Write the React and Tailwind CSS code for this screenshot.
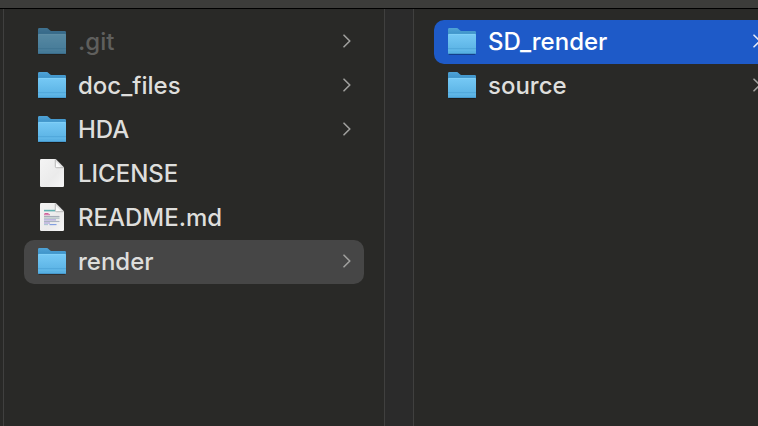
import { useId, useState } from "react";

const COLUMNS = [
  {
    id: "root",
    items: [
      { name: ".git", type: "folder", hidden: true },
      { name: "doc_files", type: "folder" },
      { name: "HDA", type: "folder" },
      { name: "LICENSE", type: "file" },
      { name: "README.md", type: "markdown" },
      { name: "render", type: "folder" },
    ],
  },
  {
    id: "render",
    items: [
      { name: "SD_render", type: "folder" },
      { name: "source", type: "folder" },
    ],
  },
];

const App = () => {
  const [selected, setSelected] = useState({
    root: "render",
    render: "SD_render",
  });
  const [activeColumn, setActiveColumn] = useState("render");

  const handleSelect = (columnId, name) => {
    setSelected((prev) => ({ ...prev, [columnId]: name }));
    setActiveColumn(columnId);
  };

  return (
    <div className="min-h-screen flex flex-col overflow-hidden bg-[#292927] font-['Inter','Liberation_Sans',sans-serif]">
      {/* Bottom edge of the toolbar */}
      <header className="h-[9px] shrink-0 bg-[#3c3c3a] border-b border-black" />

      {/* Columns */}
      <main className="flex flex-1 pl-[3px]">
        {COLUMNS.map((column) => (
          <Column
            key={column.id}
            items={column.items}
            selectedName={selected[column.id]}
            isActive={activeColumn === column.id}
            onSelect={(name) => handleSelect(column.id, name)}
          />
        ))}
      </main>
    </div>
  );
};

// ── Single column with its resize gutter ──
const Column = ({ items, selectedName, isActive, onSelect }) => (
  <>
    <ul className="w-[382px] shrink-0 border-x border-[#40403f] px-5 pt-[11px]">
      {items.map((item) => (
        <li key={item.name}>
          <Row
            item={item}
            isSelected={item.name === selectedName}
            isActive={isActive}
            onClick={() => onSelect(item.name)}
          />
        </li>
      ))}
    </ul>
    <div className="w-7 shrink-0 bg-[#2b2b2b]" />
  </>
);

// ── File or folder row ──
const Row = ({ item, isSelected, isActive, onClick }) => {
  let rowStyle = "text-[#dededc]";
  if (isSelected) {
    rowStyle = isActive ? "bg-[#1e5ac8] text-white" : "bg-[#464646] text-[#dededc]";
  }

  return (
    <button
      onClick={onClick}
      className={`flex h-11 w-full items-center gap-3 rounded-[10px] pl-3.5 pr-[13px] text-left text-2xl font-medium ${rowStyle}`}
    >
      <span className={item.hidden ? "opacity-60" : ""}>
        {item.type === "folder" ? (
          <FolderIcon />
        ) : (
          <FileIcon hasText={item.type === "markdown"} />
        )}
      </span>
      <span className={`flex-1 truncate ${item.hidden ? "text-[#5f5f5d]" : ""}`}>
        {item.name}
      </span>
      {item.type === "folder" && (
        <Chevron
          className={isSelected && isActive ? "text-[#e3eaf8]" : "text-[#a0a09e]"}
        />
      )}
    </button>
  );
};

// ── Icons ──
const FolderIcon = () => {
  const id = useId();

  return (
    <svg width="28" height="28" viewBox="0 0 28 28" aria-hidden="true">
      <defs>
        <linearGradient id={`${id}back`} x1="0" y1="0" x2="0" y2="1">
          <stop offset="0" stopColor="#4fa3d6" />
          <stop offset="0.3" stopColor="#3a8fc6" />
        </linearGradient>
        <linearGradient id={`${id}front`} x1="0" y1="0" x2="0" y2="1">
          <stop offset="0" stopColor="#76c9f5" />
          <stop offset="1" stopColor="#55aee1" />
        </linearGradient>
      </defs>
      <rect x="0.5" y="25" width="27" height="2" rx="1" fill="#000" opacity="0.3" />
      <path
        d="M0 1.4Q0 0 1.4 0H8.2C9.4 0 10 .4 10.8 1.2L11.6 2C12.3 2.7 12.9 3 14 3H26.8Q28 3 28 4.2V24.8Q28 26 26.8 26H1.2Q0 26 0 24.8Z"
        fill={`url(#${id}back)`}
      />
      <path
        d="M0 7Q0 6 1 6H27Q28 6 28 7V24.8Q28 26 26.8 26H1.2Q0 26 0 24.8Z"
        fill={`url(#${id}front)`}
      />
      <path d="M.5 6.4H27.5" stroke="#85d2f8" strokeWidth="0.8" />
      <path d="M0 20.5H28" stroke="#4fa6d9" strokeWidth="0.8" />
      <path d="M0 22.5H28" stroke="#65b9e8" strokeWidth="0.6" />
      <path d="M.6 25.5H27.4" stroke="#4799cd" />
    </svg>
  );
};

const FileIcon = ({ hasText }) => {
  const id = useId();

  return (
    <svg width="28" height="30" viewBox="0 0 28 30" aria-hidden="true">
      <defs>
        <linearGradient id={`${id}page`} x1="0" y1="0" x2="1" y2="1">
          <stop offset="0" stopColor="#f4f4f4" />
          <stop offset="0.6" stopColor="#ebebeb" />
          <stop offset="1" stopColor="#f6f6f6" />
        </linearGradient>
        <linearGradient id={`${id}fold`} x1="0" y1="1" x2="1" y2="0">
          <stop offset="0" stopColor="#ffffff" />
          <stop offset="0.3" stopColor="#fafafa" />
          <stop offset="0.5" stopColor="#cfcfcf" />
        </linearGradient>
      </defs>
      <path
        d="M2 1.2Q2 0 3.2 0H17.6L26 8.4V26.8Q26 28 24.8 28H3.2Q2 28 2 26.8Z"
        fill={`url(#${id}page)`}
      />
      <path d="M17.6 0V7.2Q17.6 8.4 18.8 8.4H26Z" fill={`url(#${id}fold)`} />
      <path d="M17.3 .4V7.5Q17.3 8.7 18.5 8.7H25.8" fill="none" stroke="#a9a9a9" strokeWidth="0.8" />
      {hasText && (
        <g strokeWidth="1.1" fill="none">
          <path d="M6 7.6H17" stroke="#62b0b0" strokeWidth="1.6" />
          <path d="M6.5 10.5H10.5M6 11.8H12" stroke="#d0619c" />
          <path d="M6 13.5H21.5" stroke="#a5adb8" />
          <path d="M6 15.1H21.5" stroke="#a2b7ba" />
          <path d="M6 16.9H18" stroke="#a69ad8" />
          <path d="M6 18.5H21.5" stroke="#aab3c0" />
          <path d="M6 20H12" stroke="#a69ad8" />
          <path d="M6 21.6H10" stroke="#a9c4d0" />
          <path d="M11.5 21.6H18.5" stroke="#7d9be0" />
        </g>
      )}
    </svg>
  );
};

const Chevron = ({ className }) => (
  <svg
    width="8"
    height="14"
    viewBox="0 0 8 14"
    fill="none"
    stroke="currentColor"
    strokeWidth="1.6"
    strokeLinecap="round"
    strokeLinejoin="round"
    className={`mb-0.5 shrink-0 ${className}`}
    aria-hidden="true"
  >
    <path d="M1 1.2 6.8 7 1 12.8" />
  </svg>
);

export default App;
